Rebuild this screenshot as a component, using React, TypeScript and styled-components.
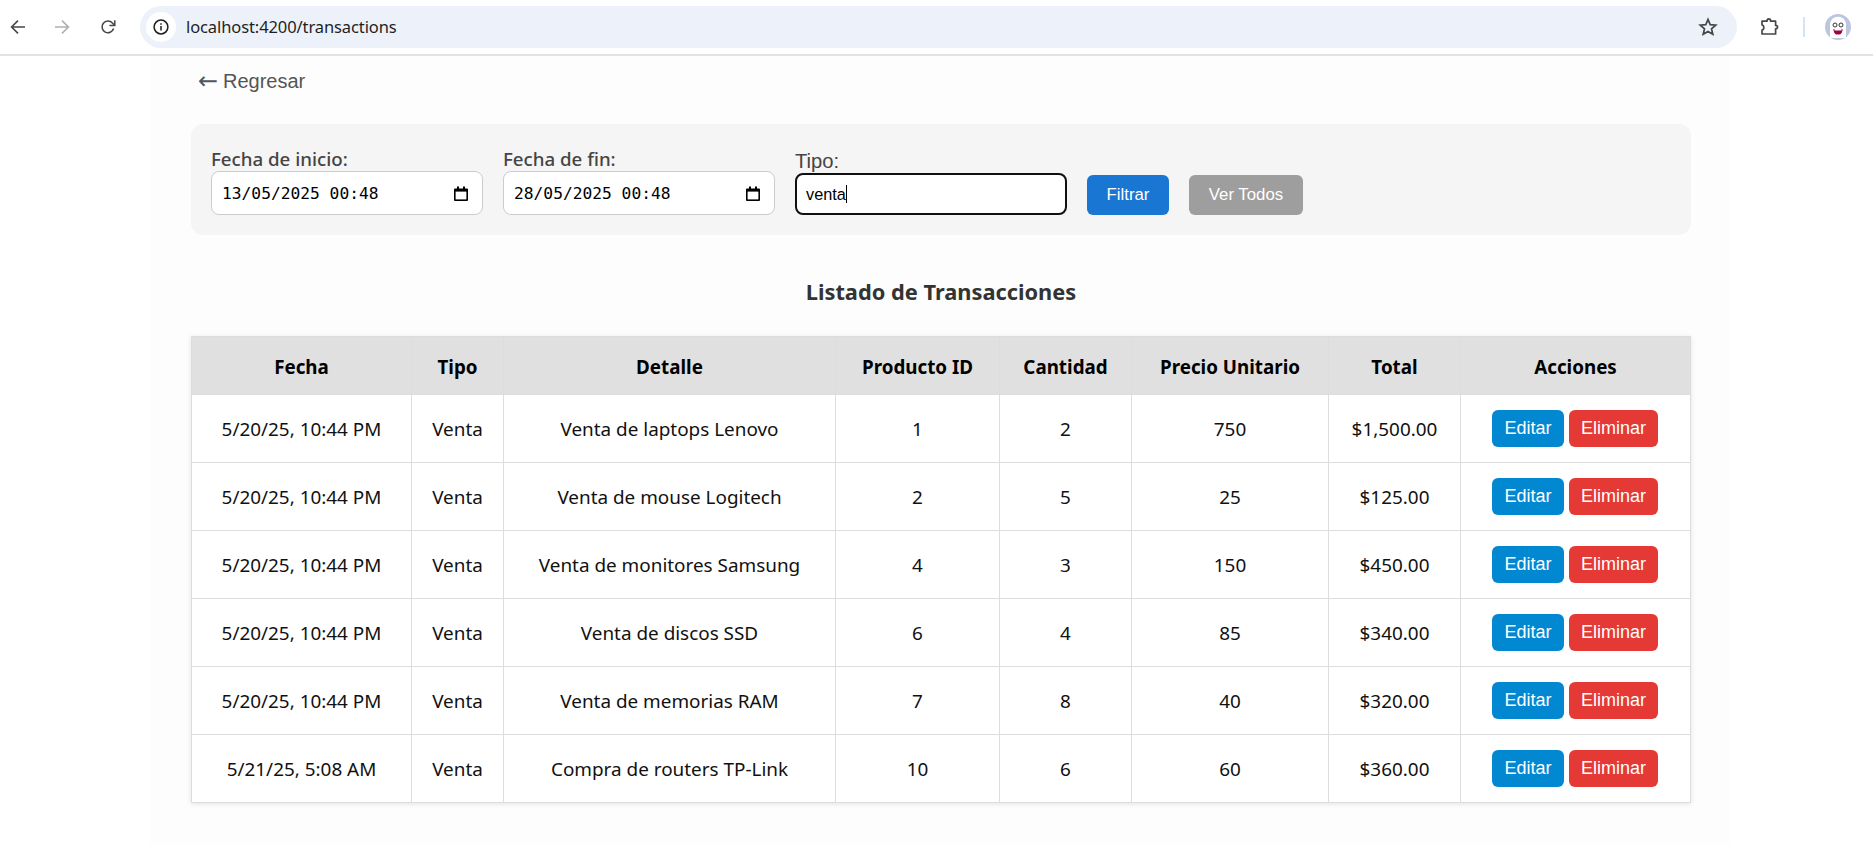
import React from "react";
import styled, { createGlobalStyle } from "styled-components";

const Global = createGlobalStyle`
  html, body { margin: 0; padding: 0; background: #fff; }
  body { font-family: "Noto Sans", "Open Sans", sans-serif; overflow: hidden; }
`;

const Toolbar = styled.header`
  height: 54px;
  display: flex;
  align-items: center;
  background: #fff;
  border-bottom: 2px solid #e2e2e2;
`;
const NavIcon = styled.span<{ $w: number }>`
  width: ${(p) => p.$w}px;
  flex: none;
  display: flex;
  justify-content: center;
  align-items: center;
`;
const UrlBar = styled.div`
  width: 1597px;
  height: 42px;
  display: flex;
  align-items: center;
  border-radius: 21px;
  background: #edf2fa;
  padding: 0 19px 0 6px;
  box-sizing: border-box;
`;
const InfoBadge = styled.span`
  width: 30px;
  height: 30px;
  border-radius: 50%;
  background: #fff;
  display: flex;
  align-items: center;
  justify-content: center;
  flex: none;
`;
const UrlText = styled.span`
  margin-left: 10px;
  padding-bottom: 2px;
  font-size: 16.5px;
  color: #1f1f1f;
  flex: 1;
  letter-spacing: -0.1px;
`;
const Separator = styled.span`
  width: 2px;
  height: 20px;
  background: #d3e3fd;
  flex: none;
`;

const Page = styled.main`
  width: 1580px;
  height: 788px;
  margin-left: 150px;
  padding: 0 39px 0 41px;
  box-sizing: border-box;
  background: #fdfdfd;
  overflow: hidden;
`;
const BackLink = styled.a`
  display: flex;
  align-items: center;
  margin: 11px 0 0 7px;
  height: 28px;
  font: 20px/28px "Liberation Sans", Arial, sans-serif;
  color: #555;
`;
const BackArrow = styled.span`
  font-family: "DejaVu Sans", sans-serif;
  font-size: 24px;
  line-height: 28px;
  width: 25px;
`;
const FilterPanel = styled.section`
  margin-top: 29px;
  height: 111px;
  background: #f5f5f5;
  border-radius: 12px;
  padding: 0 20px 20px;
  box-sizing: border-box;
  display: flex;
  align-items: flex-end;
`;
const Field = styled.label<{ $w: number; $mr: number }>`
  width: ${(p) => p.$w}px;
  margin-right: ${(p) => p.$mr}px;
  flex: none;
  display: flex;
  flex-direction: column;
`;
const FieldLabel = styled.span`
  font-size: 18.7px;
  font-weight: 500;
  line-height: 22px;
  height: 22px;
  margin-bottom: 1px;
  color: #444;
`;
const TipoLabel = styled.span`
  font: 20.2px/22px "Liberation Sans", Arial, sans-serif;
  height: 22px;
  margin-bottom: 1px;
  color: #444;
`;
const DateBox = styled.div`
  height: 44px;
  box-sizing: border-box;
  border: 1px solid #ccc;
  border-radius: 8px;
  background: #fff;
  display: flex;
  align-items: center;
  justify-content: space-between;
  padding: 0 14px 0 10px;
  font: 16.25px "DejaVu Sans Mono", "Liberation Mono", monospace;
  color: #000;
`;
const FocusedBox = styled.div`
  height: 42px;
  box-sizing: border-box;
  border: 2px solid #101010;
  border-radius: 8px;
  background: #fff;
  display: flex;
  align-items: center;
  padding: 0 9px;
  font: 16.3px "Liberation Sans", Arial, sans-serif;
  color: #000;
`;
const Caret = styled.span`
  width: 1px;
  height: 18px;
  background: #000;
`;
const FilterButton = styled.button<{ $bg: string; $w: number }>`
  width: ${(p) => p.$w}px;
  height: 40px;
  flex: none;
  margin-right: 20px;
  border: 0;
  border-radius: 6px;
  background: ${(p) => p.$bg};
  color: #fff;
  font: 16.8px "Liberation Sans", Arial, sans-serif;
  padding: 0;
`;
const Title = styled.h2`
  margin: 0;
  padding-top: 41px;
  height: 101px;
  box-sizing: border-box;
  font-size: 21.8px;
  line-height: 32px;
  font-weight: 700;
  color: #333;
  text-align: center;
`;
const Table = styled.table`
  width: 1499px;
  table-layout: fixed;
  border-collapse: collapse;
  background: #fff;
  box-shadow: 0 1px 5px rgba(0, 0, 0, 0.1);
`;
const Col = styled.col<{ $w: number }>`
  width: ${(p) => p.$w}px;
`;
const Th = styled.th`
  height: 58px;
  box-sizing: border-box;
  padding: 2px 0 0;
  background: #e0e0e0;
  border: 1px solid #dddddd;
  font-size: 18.8px;
  font-weight: 700;
  color: #000;
  text-align: center;
`;
const Td = styled.td`
  height: 68px;
  padding: 1px 0 0;
  box-sizing: border-box;
  border: 1px solid #ddd;
  font-size: 18.9px;
  color: #111;
  text-align: center;
`;
const Actions = styled.div`
  display: flex;
  justify-content: center;
  gap: 5px;
  margin: -1px 1px 0 0;
`;
const RowButton = styled.button<{ $bg: string; $w: number }>`
  width: ${(p) => p.$w}px;
  height: 37px;
  border: 0;
  border-radius: 6px;
  padding: 0;
  background: ${(p) => p.$bg};
  color: #fff;
  font: 18px "Liberation Sans", Arial, sans-serif;
`;

const CalendarIcon = () => (
  <svg width="14" height="15" viewBox="0 0 14 15" fill="none">
    <path d="M3 0.5h2v2h4v-2h2v2h2a1 1 0 0 1 1 1v10.5a1 1 0 0 1-1 1H1a1 1 0 0 1-1-1V3.5a1 1 0 0 1 1-1h2z" fill="#000" />
    <rect x="1.6" y="5.6" width="10.8" height="7.8" fill="#fff" />
  </svg>
);

const columns = [220, 92, 332, 164, 132, 197, 132, 230];
const headers = ["Fecha", "Tipo", "Detalle", "Producto ID", "Cantidad", "Precio Unitario", "Total", "Acciones"];
const rows = [
  ["5/20/25, 10:44 PM", "Venta", "Venta de laptops Lenovo", "1", "2", "750", "$1,500.00"],
  ["5/20/25, 10:44 PM", "Venta", "Venta de mouse Logitech", "2", "5", "25", "$125.00"],
  ["5/20/25, 10:44 PM", "Venta", "Venta de monitores Samsung", "4", "3", "150", "$450.00"],
  ["5/20/25, 10:44 PM", "Venta", "Venta de discos SSD", "6", "4", "85", "$340.00"],
  ["5/20/25, 10:44 PM", "Venta", "Venta de memorias RAM", "7", "8", "40", "$320.00"],
  ["5/21/25, 5:08 AM", "Venta", "Compra de routers TP-Link", "10", "6", "60", "$360.00"],
];

export default function App() {
  return (
    <>
      <Global />
      <Toolbar>
        <NavIcon $w={36}>
          <svg width="16" height="16" viewBox="0 0 16 16" fill="none" stroke="#474747" strokeWidth="1.6">
            <path d="M15 8H1.8M8 1.6 1.6 8 8 14.4" />
          </svg>
        </NavIcon>
        <NavIcon $w={52}>
          <svg width="16" height="16" viewBox="0 0 16 16" fill="none" stroke="#b0b0b0" strokeWidth="1.6">
            <path d="M1 8h13.2M8 1.6 14.4 8 8 14.4" />
          </svg>
        </NavIcon>
        <NavIcon $w={40}>
          <svg width="16" height="16" viewBox="0 0 16 16" fill="none" stroke="#474747" strokeWidth="1.6">
            <path d="M13.6 9.6A5.9 5.9 0 1 1 12.4 4L14.6 6.2" />
            <path d="M14.8 1.2v5.4H9.4" strokeWidth="1.5" />
          </svg>
        </NavIcon>
        <NavIcon $w={12} />
        <UrlBar>
          <InfoBadge>
            <svg width="16" height="16" viewBox="0 0 16 16" fill="none" stroke="#1f1f1f" strokeWidth="1.5">
              <circle cx="8" cy="8" r="6.9" />
              <path d="M8 7v4.6M8 4.2v1.6" />
            </svg>
          </InfoBadge>
          <UrlText>localhost:4200/transactions</UrlText>
          <svg width="20" height="20" viewBox="0 0 20 20" fill="none" stroke="#474747" strokeWidth="1.7" strokeLinejoin="miter">
            <path d="M10 2.4 12.2 7.6l5.6.5-4.3 3.7 1.3 5.5L10 14.4l-4.8 2.9 1.3-5.5-4.3-3.7 5.6-.5z" />
          </svg>
        </UrlBar>
        <NavIcon $w={66}>
          <svg width="20" height="20" viewBox="0 0 20 20" fill="none" stroke="#474747" strokeWidth="1.7" strokeLinejoin="round">
            <path d="M2 4.2h5c0-3.2 3.6-3.2 3.6 0h5v4.2c2.6 0 2.6 3.4 0 3.4v5.2H2v-4c2.4-.2 2.4-4.8 0-5z" />
          </svg>
        </NavIcon>
        <Separator />
        <NavIcon $w={66}>
          <svg width="26" height="26" viewBox="0 0 26 26">
            <circle cx="13" cy="13" r="13" fill="#bcc6e0" />
            <path d="M5 24V11c0-11 16-11 16 0v13z" fill="#fff" />
            <circle cx="10" cy="11" r="2" fill="#fff" stroke="#333" strokeWidth="1" />
            <circle cx="16" cy="11" r="2" fill="#fff" stroke="#333" strokeWidth="1" />
            <path d="M8.5 15h9c0 5-2.6 5.6-4.5 5.6S8.5 20 8.5 15z" fill="#a3003c" />
            <rect x="9.5" y="15" width="7" height="1.5" fill="#fff" />
          </svg>
        </NavIcon>
      </Toolbar>
      <Page>
        <BackLink><BackArrow>←</BackArrow>Regresar</BackLink>
        <FilterPanel>
          <Field $w={272} $mr={20}>
            <FieldLabel>Fecha de inicio:</FieldLabel>
            <DateBox>
              <span>13/05/2025 00:48</span>
              <CalendarIcon />
            </DateBox>
          </Field>
          <Field $w={272} $mr={20}>
            <FieldLabel>Fecha de fin:</FieldLabel>
            <DateBox>
              <span>28/05/2025 00:48</span>
              <CalendarIcon />
            </DateBox>
          </Field>
          <Field $w={272} $mr={20}>
            <TipoLabel>Tipo:</TipoLabel>
            <FocusedBox>
              <span>venta</span>
              <Caret />
            </FocusedBox>
          </Field>
          <FilterButton $bg="#1976d2" $w={82}>Filtrar</FilterButton>
          <FilterButton $bg="#9e9e9e" $w={114}>Ver Todos</FilterButton>
        </FilterPanel>
        <Title>Listado de Transacciones</Title>
        <Table>
          <colgroup>
            {columns.map((w, i) => (
              <Col key={i} $w={w} />
            ))}
          </colgroup>
          <thead>
            <tr>
              {headers.map((h) => (
                <Th key={h}>{h}</Th>
              ))}
            </tr>
          </thead>
          <tbody>
            {rows.map((r, i) => (
              <tr key={i}>
                {r.map((c, j) => (
                  <Td key={j}>{c}</Td>
                ))}
                <Td>
                  <Actions>
                    <RowButton $bg="#0288d1" $w={72}>Editar</RowButton>
                    <RowButton $bg="#e53935" $w={89}>Eliminar</RowButton>
                  </Actions>
                </Td>
              </tr>
            ))}
          </tbody>
        </Table>
      </Page>
    </>
  );
}
